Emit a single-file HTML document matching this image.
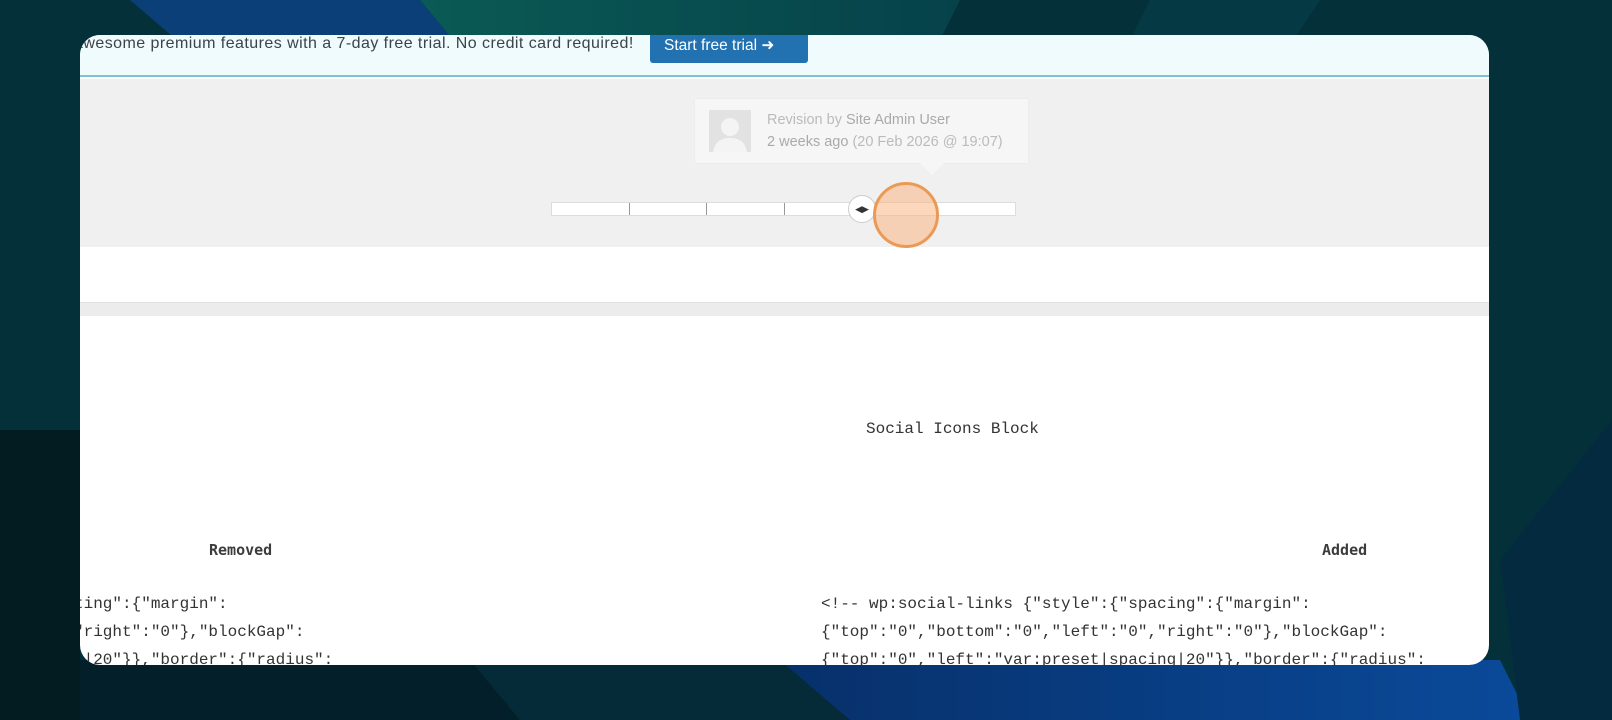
<!DOCTYPE html>
<html><head><meta charset="utf-8"><style>
*{margin:0;padding:0;box-sizing:border-box}
body{width:1612px;height:720px;overflow:hidden;position:relative;background:#04303a;font-family:"Liberation Sans",sans-serif}
#bg{position:absolute;left:0;top:0}
.card{position:absolute;left:80px;top:35px;width:1409px;height:630px;border-radius:20px;overflow:hidden;background:#fff}
.banner{position:absolute;left:0;top:0;width:100%;height:42px;background:#effbfd;border-bottom:2px solid #7ec3d3}
.banner .t{position:absolute;left:-6px;top:0px;font-size:16px;letter-spacing:0.45px;color:#3c434a;white-space:nowrap}
.btn{position:absolute;left:570px;top:-2px;width:158px;height:30px;background:#2271b1;border-radius:0 0 3px 3px;color:#fff;font-size:15.5px;padding:3px 0 0 14px}
.grey{position:absolute;left:0;top:44px;width:100%;height:168px;background:#f0f0f0}
.tip{position:absolute;left:615px;top:20px;width:333px;height:64px;background:#f6f6f6;box-shadow:0 0 2px rgba(0,0,0,.05)}
.tip:after{content:"";position:absolute;left:225px;bottom:-12px;border:12px solid transparent;border-top-color:#f6f6f6;border-bottom:0}
.av{position:absolute;left:14px;top:11px;width:42px;height:42px;background:#e2e2e2;overflow:hidden}
.tip .l{position:absolute;left:72px;font-size:14.5px;color:#bbb;white-space:nowrap}
.tip b{font-weight:normal;color:#aaa}
.track{position:absolute;left:471px;top:123px;width:465px;height:14px;background:#fff;border:1px solid #ddd}
.track i{position:absolute;top:0;width:1px;height:12px;background:#999}
.handle{position:absolute;left:768px;top:116px;width:28px;height:28px;border-radius:50%;background:#fff;border:1px solid #ccc;font-size:9px;color:#333;text-align:center;line-height:26px}
.cursor{position:absolute;left:793px;top:103px;width:66px;height:66px;border-radius:50%;background:rgba(250,175,120,.5);border:3px solid #eb9a55}
.sep{position:absolute;left:0;top:267px;width:100%;height:14px;background:#ececec;border-top:1px solid #e2e2e2}
.mono{font-family:"Liberation Mono",monospace;font-size:16px;color:#333;position:absolute;white-space:nowrap}
.h{font-family:"DejaVu Sans Mono","Liberation Mono",monospace;font-weight:bold;font-size:15px;color:#3c3c3c;position:absolute}
</style></head><body>
<svg id="bg" width="1612" height="720">
<defs><linearGradient id="g1" x1="0" x2="1"><stop offset="0" stop-color="#0a5a55"/><stop offset="1" stop-color="#06424a"/></linearGradient>
<linearGradient id="g2" x1="0" x2="1"><stop offset="0" stop-color="#07306a"/><stop offset="1" stop-color="#0a4a9a"/></linearGradient></defs>
<polygon points="130,0 420,0 470,60 200,60" fill="#0a3f78"/>
<polygon points="420,0 960,0 930,60 470,60" fill="url(#g1)"/>
<polygon points="1150,0 1320,0 1280,60 1120,60" fill="#053a44"/>
<polygon points="0,430 80,430 80,720 0,720" fill="#031c22"/>
<polygon points="80,660 480,660 530,720 80,720" fill="#03202a"/>
<polygon points="470,660 780,660 860,720 520,720" fill="#052a38"/>
<polygon points="780,660 1500,660 1530,720 850,720" fill="url(#g2)"/>
<polygon points="1500,560 1612,420 1612,720 1520,720" fill="#042a40"/>
</svg>
<div class="card">
<div class="banner"><div class="t">awesome premium features with a 7-day free trial. No credit card required!</div><div class="btn">Start free trial ➜</div></div>
<div class="grey">
<div class="tip"><div class="av"><svg width="42" height="42"><circle cx="21" cy="17" r="9" fill="#f4f4f4"/><path d="M4 42 C6 30 14 28 21 28 C28 28 36 30 38 42Z" fill="#f4f4f4"/></svg></div>
<div class="l" style="top:13px">Revision by <b>Site Admin User</b></div>
<div class="l" style="top:35px"><b>2 weeks ago</b> (20 Feb 2026 @ 19:07)</div></div>
<div class="track"><i style="left:77px"></i><i style="left:154px"></i><i style="left:232px"></i></div>
<div class="handle">◀▶</div>
<div class="cursor"></div>
</div>
<div class="sep"></div>
<div class="mono" style="left:786px;top:385px">Social Icons Block</div>
<div class="h" style="left:129px;top:506px">Removed</div>
<div class="h" style="left:1242px;top:506px">Added</div>
<div class="mono" style="left:-6px;top:555px;line-height:28px">ting":{"margin":<br>"right":"0"},"blockGap":<br>g|20"}},"border":{"radius":</div>
<div class="mono" style="left:741px;top:555px;line-height:28px">&lt;!-- wp:social-links {"style":{"spacing":{"margin":<br>{"top":"0","bottom":"0","left":"0","right":"0"},"blockGap":<br>{"top":"0","left":"var:preset|spacing|20"}},"border":{"radius":</div>
</div>
</body></html>
